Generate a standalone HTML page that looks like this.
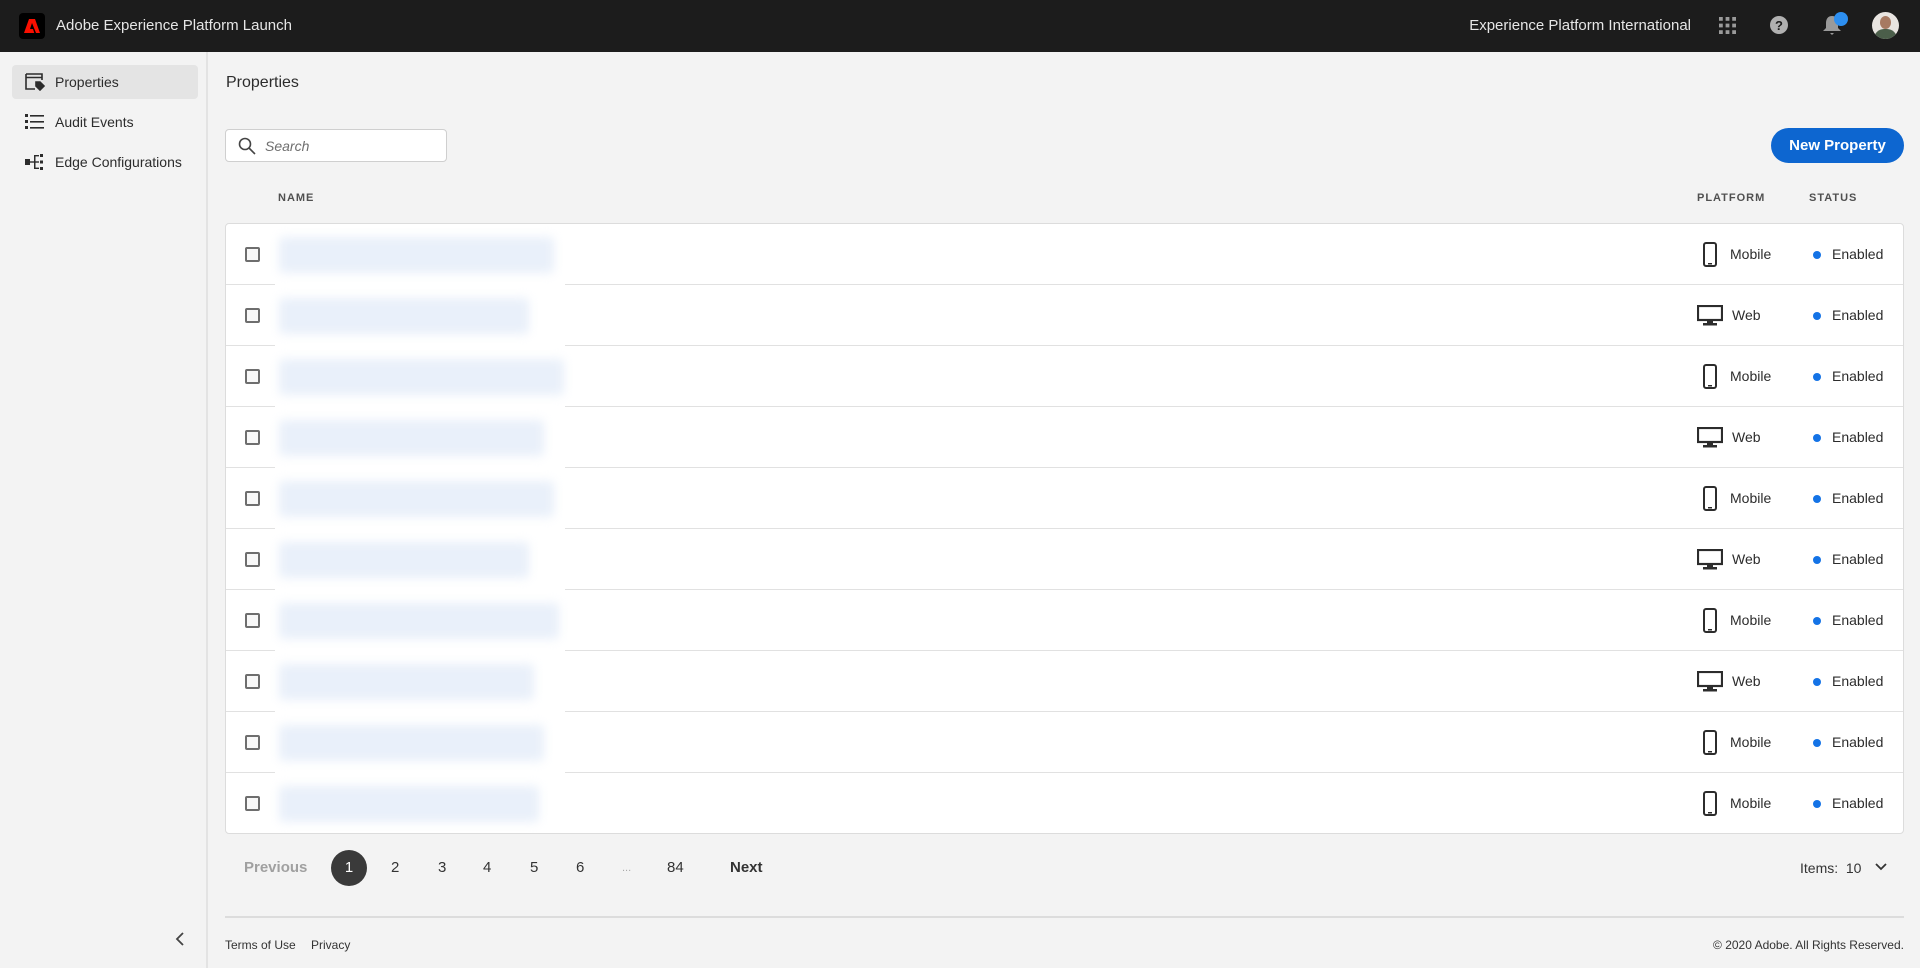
<!DOCTYPE html>
<html><head><meta charset="utf-8"><style>
*{box-sizing:border-box;margin:0;padding:0}
body{width:1920px;height:968px;overflow:hidden;background:#f3f3f3;font-family:"Liberation Sans",sans-serif;color:#2c2c2c;position:relative}
.top{position:absolute;left:0;top:0;width:1920px;height:52px;background:#1c1c1c}
.abs{position:absolute}
.side{position:absolute;left:0;top:52px;width:208px;height:916px;border-right:2px solid #e3e3e3;background:#f3f3f3}
.nav{position:absolute;left:12px;width:186px;height:34px;border-radius:4px;font-size:14px;line-height:34px;padding-left:43px;color:#2c2c2c}
.nav svg{position:absolute;left:13px;top:8px}
.table{position:absolute;left:225px;top:223px;width:1679px;height:611px;background:#fff;border:1px solid #dcdcdc;border-radius:4px;overflow:hidden}
.row{position:absolute;left:0;width:1677px;height:61px;border-bottom:1px solid #e1e1e1}
.cb{position:absolute;left:19px;top:23px;width:15px;height:15px;border:2px solid #6e6e6e;border-radius:2px;background:#f8f8f8}
.pt{position:absolute;top:0;line-height:61px;font-size:14px}
.dot{position:absolute;left:1587px;top:27px;width:8px;height:8px;border-radius:50%;background:#1473e6}
.blur{position:absolute;left:49px;top:0;width:290px;height:611px;background:#fff}
.bar{position:absolute;left:4px;height:36px;background:#e9f0fa;filter:blur(5px);border-radius:4px}
.hd{position:absolute;top:192px;font-size:11px;font-weight:bold;letter-spacing:1px;color:#505050}
.pg{position:absolute;top:858px;font-size:15px;line-height:20px;color:#333}
</style></head><body>
<div class="top">
  <div class="abs" style="left:19px;top:13px;width:26px;height:26px;background:#000;border-radius:4px"></div>
  <svg class="abs" style="left:23px;top:17px" width="18" height="18" viewBox="0 0 18 18"><path d="M6 2h6l5 14h-4l-4-10-2 6h3l1.3 4H1z" fill="#fa0f00"/></svg>
  <div class="abs" style="left:56px;top:17px;font-size:15px;color:#e6e6e6">Adobe Experience Platform Launch</div>
  <div class="abs" style="right:229px;top:17px;font-size:15px;color:#e6e6e6">Experience Platform International</div>
  <svg class="abs" style="left:1719px;top:17px" width="17" height="17" viewBox="0 0 18 18" fill="#9a9a9a"><rect x="0" y="0" width="4" height="4"/><rect x="7" y="0" width="4" height="4"/><rect x="14" y="0" width="4" height="4"/><rect x="0" y="7" width="4" height="4"/><rect x="7" y="7" width="4" height="4"/><rect x="14" y="7" width="4" height="4"/><rect x="0" y="14" width="4" height="4"/><rect x="7" y="14" width="4" height="4"/><rect x="14" y="14" width="4" height="4"/></svg>
  <svg class="abs" style="left:1770px;top:16px" width="18" height="18" viewBox="0 0 18 18"><circle cx="9" cy="9" r="9" fill="#b0b0b0"/><text x="9" y="14" font-size="13" font-weight="bold" text-anchor="middle" fill="#1c1c1c" font-family="Liberation Sans">?</text></svg>
  <svg class="abs" style="left:1822px;top:14px" width="20" height="22" viewBox="0 0 20 22"><path d="M10 2c-4 0-6 3-6 7v5l-3 3h18l-3-3V9c0-4-2-7-6-7z" fill="#9a9a9a"/><path d="M8 19h4l-2 2z" fill="#9a9a9a"/></svg>
  <div class="abs" style="left:1834px;top:12px;width:14px;height:14px;border-radius:50%;background:#2d8ff0"></div>
  <div class="abs" style="left:1872px;top:12px;width:27px;height:27px;border-radius:50%;background:#e8e4e0;overflow:hidden"><div class="abs" style="left:8px;top:4px;width:11px;height:13px;border-radius:50%;background:#a77a62"></div><div class="abs" style="left:2px;top:17px;width:23px;height:14px;border-radius:10px 10px 0 0;background:#4b5e4a"></div></div>
</div>
<div class="side">
  <div class="nav" style="top:13px;background:#e4e4e4">Properties<svg width="20" height="18" viewBox="0 0 20 18" fill="none" stroke="#2c2c2c" stroke-width="1.6"><path d="M1 1h16v6M1 1v15h9M1 4.5h16"/><path d="M11 9h4l4 4-4 4-4-4z" fill="#2c2c2c"/></svg></div>
  <div class="nav" style="top:53px">Audit Events<svg width="20" height="18" viewBox="0 0 20 18" fill="#2c2c2c"><rect x="0" y="1" width="3" height="3"/><rect x="5" y="2" width="14" height="1.6"/><rect x="0" y="7" width="3" height="3"/><rect x="5" y="8" width="14" height="1.6"/><rect x="0" y="13" width="3" height="3"/><rect x="5" y="14" width="14" height="1.6"/></svg></div>
  <div class="nav" style="top:93px">Edge Configurations<svg width="20" height="18" viewBox="0 0 20 18" fill="#2c2c2c"><rect x="0" y="6" width="5" height="6"/><rect x="5" y="8.3" width="4" height="1.4"/><rect x="9" y="2" width="1.5" height="14"/><rect x="10" y="2" width="4" height="1.4"/><rect x="10" y="8.3" width="4" height="1.4"/><rect x="10" y="14.6" width="4" height="1.4"/><rect x="15" y="1" width="3" height="3"/><rect x="15" y="7.5" width="3" height="3"/><rect x="15" y="14" width="3" height="3"/></svg></div>
  <svg class="abs" style="left:175px;top:880px" width="10" height="14" viewBox="0 0 10 14"><path d="M8 1L2 7l6 6" fill="none" stroke="#444" stroke-width="1.8"/></svg>
</div>
<div class="abs" style="left:226px;top:74px;font-size:16px;color:#2c2c2c">Properties</div>
<div class="abs" style="left:225px;top:129px;width:222px;height:33px;background:#fff;border:1px solid #cfcfcf;border-radius:4px">
  <svg class="abs" style="left:12px;top:7px" width="18" height="18" viewBox="0 0 18 18" fill="none" stroke="#444" stroke-width="1.6"><circle cx="7" cy="7" r="5.5"/><path d="M11 11l6 6"/></svg>
  <div class="abs" style="left:39px;top:8px;font-size:14px;font-style:italic;color:#6e6e6e">Search</div>
</div>
<div class="abs" style="left:1771px;top:128px;width:133px;height:35px;border-radius:18px;background:#0d66d0;color:#fff;font-weight:bold;font-size:15px;line-height:35px;text-align:center">New Property</div>
<div class="hd" style="left:278px">NAME</div>
<div class="hd" style="left:1697px">PLATFORM</div>
<div class="hd" style="left:1809px">STATUS</div>
<div class="table" id="t"></div>
<div class="pg" style="left:244px;color:#a0a0a0;font-weight:bold">Previous</div>
<div class="abs" style="left:331px;top:850px;width:36px;height:36px;border-radius:50%;background:#3a3a3a;color:#fff;text-align:center;line-height:36px;font-size:15px">1</div>
<div class="pg" style="left:391px">2</div><div class="pg" style="left:438px">3</div><div class="pg" style="left:483px">4</div><div class="pg" style="left:530px">5</div><div class="pg" style="left:576px">6</div><div class="pg" style="left:622px;color:#aaa;font-size:11px">...</div><div class="pg" style="left:667px">84</div>
<div class="pg" style="left:730px;font-weight:bold">Next</div>
<div class="pg" style="left:1800px;font-size:14px">Items:&nbsp; 10</div>
<svg class="abs" style="left:1875px;top:863px" width="12" height="8" viewBox="0 0 12 8"><path d="M1 1l5 5 5-5" fill="none" stroke="#333" stroke-width="1.8"/></svg>
<div class="abs" style="left:225px;top:916px;width:1679px;height:2px;background:#dcdcdc"></div>
<div class="abs" style="left:225px;top:938px;font-size:12px;color:#333">Terms of Use</div>
<div class="abs" style="left:311px;top:938px;font-size:12px;color:#333">Privacy</div>
<div class="abs" style="right:16px;top:938px;font-size:12px;color:#333">© 2020 Adobe. All Rights Reserved.</div>
<script>
var p="MWMWMWMWMM",h="",w=[275,250,285,265,275,250,280,255,265,260];
for(var i=0;i<10;i++){var m=p[i]=="M";
h+='<div class="row" style="top:'+(i*61)+'px"><div class="cb"></div>'+
(m?'<svg class="abs" style="left:1477px;top:18px" width="14" height="25" viewBox="0 0 14 25"><rect x="1" y="1" width="12" height="23" rx="2" fill="none" stroke="#2c2c2c" stroke-width="2"/><rect x="5" y="21" width="4" height="1.5" fill="#2c2c2c"/></svg><div class="pt" style="left:1504px">Mobile</div>':
'<svg class="abs" style="left:1471px;top:20px" width="26" height="21" viewBox="0 0 26 21"><rect x="1" y="1" width="24" height="14" fill="none" stroke="#2c2c2c" stroke-width="2.2"/><rect x="10" y="15" width="6" height="3" fill="#2c2c2c"/><rect x="6" y="18" width="14" height="2.5" fill="#2c2c2c"/></svg><div class="pt" style="left:1506px">Web</div>')+
'<div class="dot"></div><div class="pt" style="left:1606px">Enabled</div></div>';}
h+='<div class="blur">';for(i=0;i<10;i++)h+='<div class="bar" style="top:'+(i*61+13)+'px;width:'+w[i]+'px"></div>';h+='</div>';
document.getElementById("t").innerHTML=h;
</script>
</body></html>
